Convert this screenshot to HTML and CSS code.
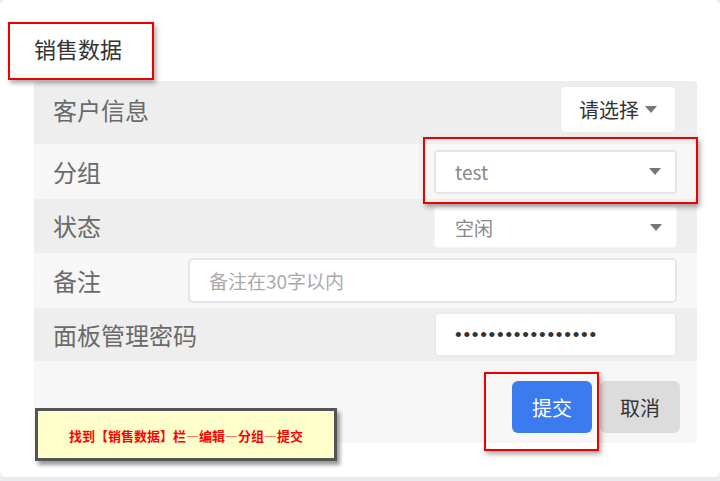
FILE: index.html
```html
<!DOCTYPE html>
<html lang="zh-CN">
<head>
<meta charset="utf-8">
<title>销售数据</title>
<link rel="stylesheet" href="styles.css">
</head>
<body>
<div class="card">
  <div class="card-head">
    <h2 class="title">销售数据</h2>
  </div>
  <div class="form">
    <div class="row row-dark row-first">
      <span class="label">客户信息</span>
      <div class="pick">请选择<i class="caret"></i></div>
    </div>
    <div class="row row-light">
      <span class="label">分组</span>
      <div class="select bordered"><span class="val">test</span><i class="caret"></i></div>
    </div>
    <div class="row row-dark">
      <span class="label">状态</span>
      <div class="select"><span class="val">空闲</span><i class="caret"></i></div>
    </div>
    <div class="row row-light">
      <span class="label">备注</span>
      <div class="input wide"><span class="ph">备注在30字以内</span></div>
    </div>
    <div class="row row-dark">
      <span class="label">面板管理密码</span>
      <div class="input pw"><span class="dots">•••••••••••••••••</span></div>
    </div>
    <div class="row row-light row-actions">
      <button class="btn btn-primary">提交</button>
      <button class="btn btn-cancel">取消</button>
    </div>
  </div>

  <div class="mark mark-title"></div>
  <div class="mark mark-group"></div>
  <div class="mark mark-submit"></div>
  <div class="note">找到【销售数据】栏—编辑—分组—提交</div>
</div>
</body>
</html>
```

FILE: styles.css
```css
html, body {
  margin: 0;
  padding: 0;
}
body {
  background: #e9ebee;
  font-family: "Noto Sans CJK SC", "Microsoft YaHei", "Noto Sans", sans-serif;
  width: 720px;
  height: 481px;
  overflow: hidden;
}
.card {
  position: relative;
  width: 720px;
  height: 477px;
  background: #ffffff;
  border-radius: 6px;
}
.card-head {
  height: 81px;
  display: flex;
  align-items: center;
  padding: 14px 0 0 34px;
  box-sizing: border-box;
}
.title {
  margin: 0;
  font-size: 22px;
  font-weight: normal;
  color: #333;
  line-height: 28px;
}
.form {
  margin-left: 34px;
  width: 663px;
  border-radius: 4px;
  overflow: hidden;
}
.row {
  display: flex;
  align-items: center;
  padding: 0 20px 0 19px;
  box-sizing: border-box;
}
.row-dark { background: #eeeeee; }
.row-light { background: #f7f7f7; }
.row-first { height: 63px; padding-bottom: 6px; }
.row:nth-child(2) { height: 55px; }
.row:nth-child(3) { height: 54px; }
.row:nth-child(4) { height: 55px; }
.row:nth-child(5) { height: 53px; }
.label {
  font-size: 24px;
  color: #6a6a6a;
  line-height: 30px;
}
.pick {
  margin-left: auto;
  margin-right: 1px;
  width: 116px;
  height: 47px;
  box-sizing: border-box;
  background: #fff;
  border: 1px solid #e9eaec;
  border-radius: 5px;
  display: flex;
  align-items: center;
  justify-content: center;
  gap: 6px;
  font-size: 20px;
  color: #333;
}
.caret {
  display: inline-block;
  width: 0;
  height: 0;
  border-left: 6px solid transparent;
  border-right: 6px solid transparent;
  border-top: 7px solid #777;
}
.select {
  margin-left: auto;
  width: 243px;
  height: 44px;
  box-sizing: border-box;
  background: #fff;
  border: 1px solid #f4f4f4;
  border-radius: 4px;
  display: flex;
  align-items: center;
  padding: 0 14px 0 20px;
  font-size: 19px;
  color: #888;
}
.select.bordered { border: 2px solid #e2e6eb; padding-left: 19px; }
.row:nth-child(3) .select { height: 42px; margin-top: 2px; }
.select .val { flex: 1; }
.input {
  margin-left: auto;
  height: 45px;
  box-sizing: border-box;
  background: #fff;
  border: 2px solid #e2e6eb;
  border-radius: 5px;
  display: flex;
  align-items: center;
  font-size: 19px;
  overflow: hidden;
}
.input.wide { width: 489px; padding-left: 19px; }
.input.pw { width: 243px; padding-left: 19px; border-color: #e9eaec; }
.ph { color: #aaa; }
.dots {
  color: #333;
  font-family: "Liberation Sans", "DejaVu Sans", sans-serif;
  font-size: 19px;
  letter-spacing: 1.75px;
}
.row-actions {
  height: 82px;
  justify-content: flex-end;
  gap: 8px;
  padding-right: 17px;
  padding-top: 10px;
}
.btn {
  width: 80px;
  height: 52px;
  border: none;
  border-radius: 6px;
  font-family: inherit;
  font-size: 20px;
  padding: 0;
}
.btn-primary { background: #3a7bf0; color: #fff; }
.btn-cancel { background: #dcdcdc; color: #333; }

.mark {
  position: absolute;
  box-sizing: border-box;
  border: 2px solid #ee0000;
  box-shadow: 2px 3px 5px rgba(0, 0, 0, 0.35);
}
.mark-title { left: 8px; top: 22px; width: 146px; height: 58px; }
.mark-group { left: 423px; top: 137px; width: 275px; height: 67px; }
.mark-submit { left: 484px; top: 372px; width: 115px; height: 79px; }

.note {
  position: absolute;
  left: 35px;
  top: 408px;
  width: 302px;
  height: 53px;
  box-sizing: border-box;
  background: #ffffcc;
  border: 3px solid #555;
  box-shadow: 3px 4px 4px rgba(0, 0, 0, 0.4);
  display: flex;
  align-items: center;
  justify-content: center;
  color: #ff0000;
  font-weight: bold;
  font-size: 13px;
  padding-top: 2px;
}
```
